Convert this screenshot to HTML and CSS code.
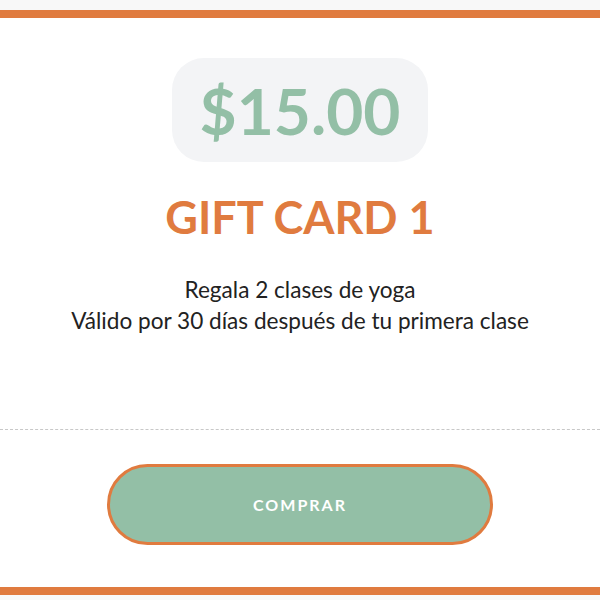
FILE: index.html
```html
<!DOCTYPE html>
<html lang="es">
<head>
<meta charset="utf-8">
<link rel="stylesheet" href="styles.css">
</head>
<body>
  <div class="card">
    <div class="top">
      <div class="price">$15.00</div>
      <h1 class="title">GIFT CARD 1</h1>
      <p class="desc">Regala 2 clases de yoga<br>Válido por 30 días después de tu primera clase</p>
    </div>
    <div class="bottom">
      <button class="buy">COMPRAR</button>
    </div>
  </div>
</body>
</html>
```

FILE: styles.css
```css
html, body {
  margin: 0;
  padding: 0;
}
body {
  background: #f8f8f8;
  font-family: Lato, "Open Sans", sans-serif;
  padding-top: 10px;
}
.card {
  background: #ffffff;
  border-top: 8px solid #e07b3f;
  border-bottom: 8px solid #e07b3f;
  height: 569px;
  display: flex;
  flex-direction: column;
}
.top {
  height: 412px;
  display: flex;
  flex-direction: column;
  align-items: center;
  padding-top: 40px;
  box-sizing: border-box;
  border-bottom: 1px dashed #c8c8c8;
}
.price {
  background: #f3f4f6;
  border-radius: 32px;
  width: 256px;
  height: 104px;
  display: flex;
  align-items: center;
  justify-content: center;
  color: #93bfa6;
  font-size: 64px;
  font-weight: 700;
}
.title {
  margin: 29px 0 0;
  color: #e07b3f;
  font-size: 45px;
  font-weight: 700;
  line-height: 52px;
}
.desc {
  margin: 31px 0 0;
  text-align: center;
  color: #222222;
  font-size: 22.6px;
  line-height: 31px;
}
.bottom {
  flex: 1;
  display: flex;
  justify-content: center;
  padding-top: 34px;
}
.buy {
  width: 386px;
  height: 81px;
  border: 3px solid #e07b3f;
  border-radius: 41px;
  background: #93bfa6;
  color: #ffffff;
  font-family: Lato, sans-serif;
  font-size: 16px;
  font-weight: 700;
  letter-spacing: 2px;
  cursor: pointer;
}
```
